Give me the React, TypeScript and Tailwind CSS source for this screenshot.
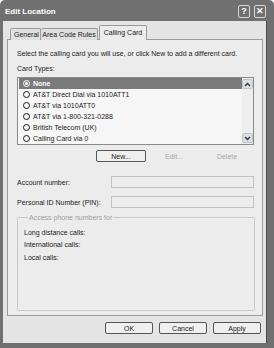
import React from "react";

const cards = [
  "None",
  "AT&T Direct Dial via 1010ATT1",
  "AT&T via 1010ATT0",
  "AT&T via 1-800-321-0288",
  "British Telecom (UK)",
  "Calling Card via 0",
];

function Radio({ on, inv }: { on?: boolean; inv?: boolean }) {
  return (
    <span
      className={
        inv
          ? "w-[7px] h-[7px] rounded-full border border-white flex items-center justify-center shrink-0"
          : "w-[7px] h-[7px] rounded-full border-[1.5px] border-[#1a1a1a] flex items-center justify-center shrink-0"
      }
    >
      {on && <span className="w-[3px] h-[3px] rounded-full bg-white" />}
    </span>
  );
}

function Chevron({ up }: { up?: boolean }) {
  return (
    <svg width="7" height="5" viewBox="0 0 7 5">
      <path
        d={up ? "M1 4 L3.5 1.5 L6 4" : "M1 1 L3.5 3.5 L6 1"}
        fill="none"
        stroke="#333"
        strokeWidth="1.4"
      />
    </svg>
  );
}

function Btn({ label, disabled }: { label: string; disabled?: boolean }) {
  return (
    <div
      className={
        disabled
          ? "w-[50px] h-[12px] flex items-center justify-center text-[#a9a9a9]"
          : "w-[50px] h-[12px] flex items-center justify-center rounded-[2px] border border-[#555] bg-[#efefef] text-[#1a1a1a]"
      }
    >
      {label}
    </div>
  );
}

export default function App() {
  return (
    <div className="w-[274px] h-[348px] flex flex-col bg-[#707070] pl-[3px] pr-[7px] pb-[5px] font-['Liberation_Sans',Arial,sans-serif] text-[7px] leading-[9px] text-[#1a1a1a] rounded-t-[5px]">
      {/* Title bar */}
      <div className="h-[21px] flex items-center pl-[2px] pt-[2px]">
        <span className="text-white font-bold text-[8px] flex-1">Edit Location</span>
        <div className="flex gap-[4px] pr-[1px] -mt-[1px]">
          <div className="w-[12px] h-[13px] border border-[#d8d8d8] rounded-[2px] flex items-center justify-center text-white font-bold text-[9px]">
            ?
          </div>
          <div className="w-[12px] h-[13px] border border-[#d8d8d8] rounded-[2px] flex items-center justify-center text-white font-bold text-[9px]">
            ✕
          </div>
        </div>
      </div>

      {/* Dialog body */}
      <div className="flex-1 bg-[#e4e4e4] flex flex-col pl-[4px] pr-[3px] pt-[4px] border-r border-[#4a4a4a]">
        {/* Tabs */}
        <div className="flex items-end h-[15px] pl-[3px] -mb-px relative">
          <div className="h-[12px] px-[3px] w-[31px] flex items-center border border-b-0 border-[#9a9a9a] bg-[#e0e0e0] rounded-t-[2px]">
            General
          </div>
          <div className="h-[12px] w-[57px] flex items-center justify-center border border-b-0 border-l-0 border-[#9a9a9a] bg-[#e0e0e0] rounded-t-[2px]">
            Area Code Rules
          </div>
          <div className="h-[15px] w-[48px] ml-[1px] flex items-start pt-[2px] justify-center border border-b-0 border-[#9a9a9a] bg-[#ececec] rounded-t-[2px] relative z-10">
            Calling Card
          </div>
        </div>

        {/* Tab panel */}
        <div className="h-[277px] border border-[#9a9a9a] bg-[#ececec] flex flex-col pl-[9px] pr-[8px]">
          <div className="mt-[9px]">
            Select the calling card you will use, or click New to add a different card.
          </div>
          <div className="mt-[6px]">Card Types:</div>

          {/* List */}
          <div className="mt-[4px] h-[68px] border border-[#8a8a8a] bg-[#f6f6f6] flex">
            <div className="flex-1 flex flex-col pl-px">
              {cards.map((c, i) =>
                i === 0 ? (
                  <div
                    key={c}
                    className="h-[11px] flex items-center gap-[3px] pl-[4px] bg-[#7a7a7a] text-white font-bold"
                  >
                    <Radio on inv />
                    {c}
                  </div>
                ) : (
                  <div key={c} className="h-[11px] flex items-center gap-[3px] pl-[4px]">
                    <Radio />
                    {c}
                  </div>
                )
              )}
            </div>
            <div className="w-[11px] flex flex-col justify-between py-px bg-[#eeeeee]">
              <div className="h-[10px] border border-[#bfc3cc] bg-[#dcdfe6] rounded-[2px] flex items-center justify-center">
                <Chevron up />
              </div>
              <div className="h-[10px] border border-[#bfc3cc] bg-[#dcdfe6] rounded-[2px] flex items-center justify-center">
                <Chevron />
              </div>
            </div>
          </div>

          {/* New / Edit / Delete */}
          <div className="mt-[5px] flex justify-end gap-[3px] pr-[2px]">
            <Btn label="New..." />
            <Btn label="Edit..." disabled />
            <Btn label="Delete" disabled />
          </div>

          {/* Inputs */}
          <div className="mt-[14px] flex items-center">
            <span className="w-[94px]">Account number:</span>
            <div className="w-[143px] h-[12px] border border-[#c2c2c2]" />
          </div>
          <div className="mt-[8px] flex items-center">
            <span className="w-[94px]">Personal ID Number (PIN):</span>
            <div className="w-[143px] h-[12px] border border-[#c2c2c2]" />
          </div>

          {/* Access numbers group */}
          <fieldset className="mt-[5px] h-[98px] w-[238px] border border-[#c8c8c8] rounded-[2px] pl-[6px]">
            <legend className="ml-[4px] px-[1px] text-[#a0a0a0]">Access phone numbers for</legend>
            <div className="mt-[6px]">Long distance calls:</div>
            <div className="mt-[3px]">International calls:</div>
            <div className="mt-[4px]">Local calls:</div>
          </fieldset>
        </div>

        {/* Dialog buttons */}
        <div className="mt-[6px] flex justify-end gap-[6px] pr-[2px]">
          <div className="w-[48px] h-[12px] flex items-center justify-center rounded-[2px] border border-[#555] bg-[#efefef]">
            OK
          </div>
          <div className="w-[48px] h-[12px] flex items-center justify-center rounded-[2px] border border-[#555] bg-[#efefef]">
            Cancel
          </div>
          <div className="w-[48px] h-[12px] flex items-center justify-center rounded-[2px] border border-[#555] bg-[#efefef]">
            Apply
          </div>
        </div>
      </div>
    </div>
  );
}
